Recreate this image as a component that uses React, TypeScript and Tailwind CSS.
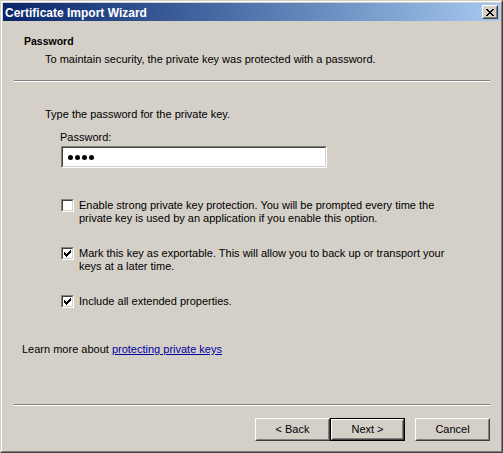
import React from 'react';

const checkPath =
  'M6 0h1v1H6z M5 1h2v1H5z M0 2h1v1H0z M4 2h3v1H4z M0 3h2v1H0z M3 3h3v1H3z M0 4h5v1H0z M1 5h3v1H1z M2 6h1v1H2z';

const closePath =
  'M0 0h2v1H0z M6 0h2v1H6z M1 1h2v1H1z M5 1h2v1H5z M2 2h4v1H2z M3 3h2v1H3z M2 4h4v1H2z M1 5h2v1H1z M5 5h2v1H5z M0 6h2v1H0z M6 6h2v1H6z';

function Etched({ className = '' }: { className?: string }) {
  return <div className={`h-[2px] border-t border-b border-t-[#808080] border-b-white ${className}`} />;
}

function Checkbox({ checked }: { checked: boolean }) {
  return (
    <div className="w-[13px] h-[13px] shrink-0 border border-t-[#808080] border-l-[#808080] border-r-white border-b-white">
      <div className="w-full h-full border border-t-[#404040] border-l-[#404040] border-r-[#d4d0c8] border-b-[#d4d0c8] bg-white flex items-center justify-center">
        {checked && (
          <svg width="7" height="7" viewBox="0 0 7 7" shapeRendering="crispEdges">
            <path d={checkPath} fill="#000" />
          </svg>
        )}
      </div>
    </div>
  );
}

function Button({ label, isDefault = false }: { label: string; isDefault?: boolean }) {
  if (isDefault) {
    return (
      <div className="w-[75px] h-[23px] border border-black">
        <div className="w-full h-full border border-t-white border-l-white border-r-[#404040] border-b-[#404040]">
          <div className="w-full h-full border border-t-[#d4d0c8] border-l-[#d4d0c8] border-r-[#808080] border-b-[#808080] flex items-center justify-center">
            {label}
          </div>
        </div>
      </div>
    );
  }
  return (
    <div className="w-[75px] h-[23px] border border-t-white border-l-white border-r-[#404040] border-b-[#404040]">
      <div className="w-full h-full border border-t-[#d4d0c8] border-l-[#d4d0c8] border-r-[#808080] border-b-[#808080] flex items-center justify-center">
        {label}
      </div>
    </div>
  );
}

const options = [
  {
    checked: false,
    text: 'Enable strong private key protection. You will be prompted every time the private key is used by an application if you enable this option.',
  },
  {
    checked: true,
    text: 'Mark this key as exportable. This will allow you to back up or transport your keys at a later time.',
  },
  { checked: true, text: 'Include all extended properties.' },
];

export default function App() {
  return (
    <div className="w-[503px] h-[453px] overflow-hidden font-['Liberation_Sans',Arial,sans-serif] text-[11px] leading-[13px] text-black">
      <div className="w-full h-full border border-t-[#d4d0c8] border-l-[#d4d0c8] border-r-[#404040] border-b-[#404040]">
        <div className="w-full h-full border border-t-white border-l-white border-r-[#808080] border-b-[#808080] p-px bg-[#d4d0c8] flex flex-col">
          {/* Title bar */}
          <div className="h-[18px] shrink-0 bg-linear-to-r from-[#0a246a] to-[#a6caf0] flex items-start justify-between pl-[2px] pr-[2px] pt-[2px]">
            <span className="text-white font-bold text-[12px] leading-[16px]">Certificate Import Wizard</span>
            <div className="w-[16px] h-[14px] border border-t-white border-l-white border-r-[#404040] border-b-[#404040] bg-[#d4d0c8]">
              <div className="w-full h-full border border-t-[#d4d0c8] border-l-[#d4d0c8] border-r-[#808080] border-b-[#808080] flex items-center justify-center">
                <svg width="8" height="7" viewBox="0 0 8 7" shapeRendering="crispEdges">
                  <path d={closePath} fill="#000" />
                </svg>
              </div>
            </div>
          </div>

          {/* Content */}
          <div className="flex-1 flex flex-col">
            {/* Header */}
            <div className="pt-[14px] pl-[21px] font-bold text-[10.5px]">Password</div>
            <div className="mt-[5px] pl-[42px]">To maintain security, the private key was protected with a password.</div>
            <Etched className="mt-[14px] ml-[11px] mr-[10px]" />

            {/* Body */}
            <div className="mt-[26px] pl-[42px]">Type the password for the private key.</div>
            <div className="mt-[10px] pl-[57px]">Password:</div>
            <div className="mt-[2px] ml-[58px] w-[266px] h-[22px] border border-t-[#808080] border-l-[#808080] border-r-white border-b-white">
              <div className="w-full h-full border border-t-[#404040] border-l-[#404040] border-r-[#d4d0c8] border-b-[#d4d0c8] bg-white flex items-center gap-[2px] pl-[5px]">
                {[0, 1, 2, 3].map((i) => (
                  <span key={i} className="w-[5px] h-[5px] rounded-full bg-black" />
                ))}
              </div>
            </div>

            <div className="mt-[31px] ml-[58px] flex flex-col gap-[22px]">
              {options.map((o, i) => (
                <div key={i} className="flex items-start gap-[5px]">
                  <Checkbox checked={o.checked} />
                  <div className="w-[372px]">{o.text}</div>
                </div>
              ))}
            </div>

            <div className="mt-[35px] pl-[19px]">
              Learn more about{' '}
              <a href="#" className="text-[#0000a0] underline">
                protecting private keys
              </a>
            </div>

            <div className="flex-1" />

            {/* Footer */}
            <Etched className="ml-[11px] mr-[10px]" />
            <div className="mt-[12px] pb-[9px] pr-[10px] flex justify-end">
              <Button label="< Back" />
              <Button label="Next >" isDefault />
              <div className="w-[10px]" />
              <Button label="Cancel" />
            </div>
          </div>
        </div>
      </div>
    </div>
  );
}
